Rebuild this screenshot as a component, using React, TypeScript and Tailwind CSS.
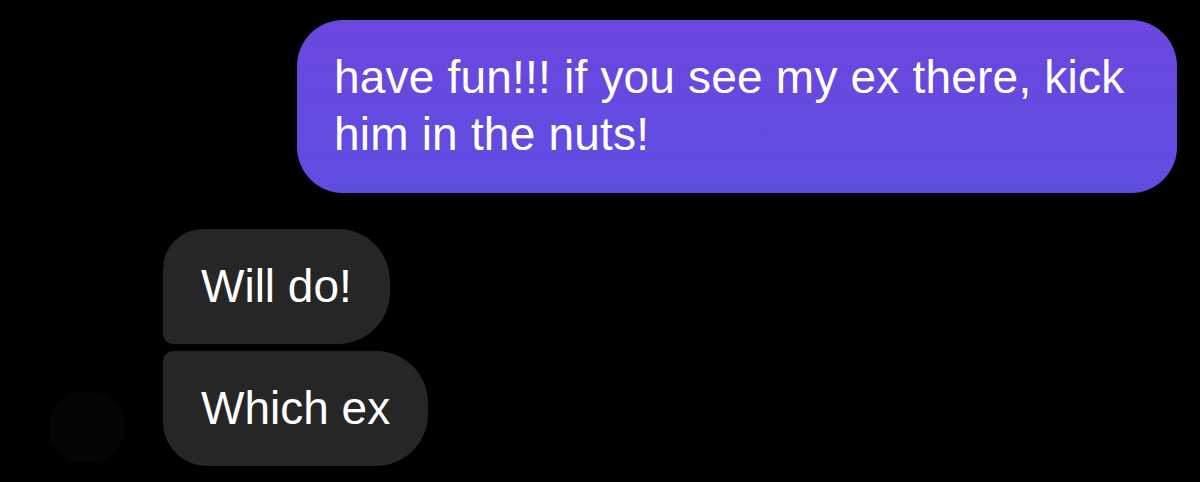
import React from 'react';

const font = { fontFamily: '"Liberation Sans", Arial, sans-serif' };

const App: React.FC = () => {
  return (
    <div className="w-[1200px] h-[482px] bg-black overflow-hidden pt-[20px]" style={font}>
      {/* outgoing message */}
      <div className="flex justify-end pr-[23px]">
        <div className="w-[880px] rounded-[46px] bg-gradient-to-b from-[#6b47df] to-[#5e4de1] pl-[37px] pr-[30px] pt-[29px] pb-[30px] text-white text-[46px] leading-[57px] tracking-[0.2px]">
          have fun!!! if you see my ex there, kick
          <br />
          him in the nuts!
        </div>
      </div>

      {/* incoming messages */}
      <div className="mt-[36px] flex items-end pl-[49px]">
        {/* avatar, almost lost in the dark */}
        <div className="w-[76px] h-[72px] mb-[3px] rounded-full bg-[#050505]" />
        <div className="ml-[38px] flex flex-col items-start gap-[7px]">
          <div className="bg-[#262626] text-white text-[46px] leading-[57px] px-[38px] py-[29px] rounded-tl-[40px] rounded-bl-[10px] rounded-r-[52px]">
            Will do!
          </div>
          <div className="bg-[#262626] text-white text-[46px] leading-[57px] px-[38px] py-[29px] rounded-tl-[10px] rounded-bl-[44px] rounded-r-[52px]">
            Which ex
          </div>
        </div>
      </div>
    </div>
  );
};

export default App;
